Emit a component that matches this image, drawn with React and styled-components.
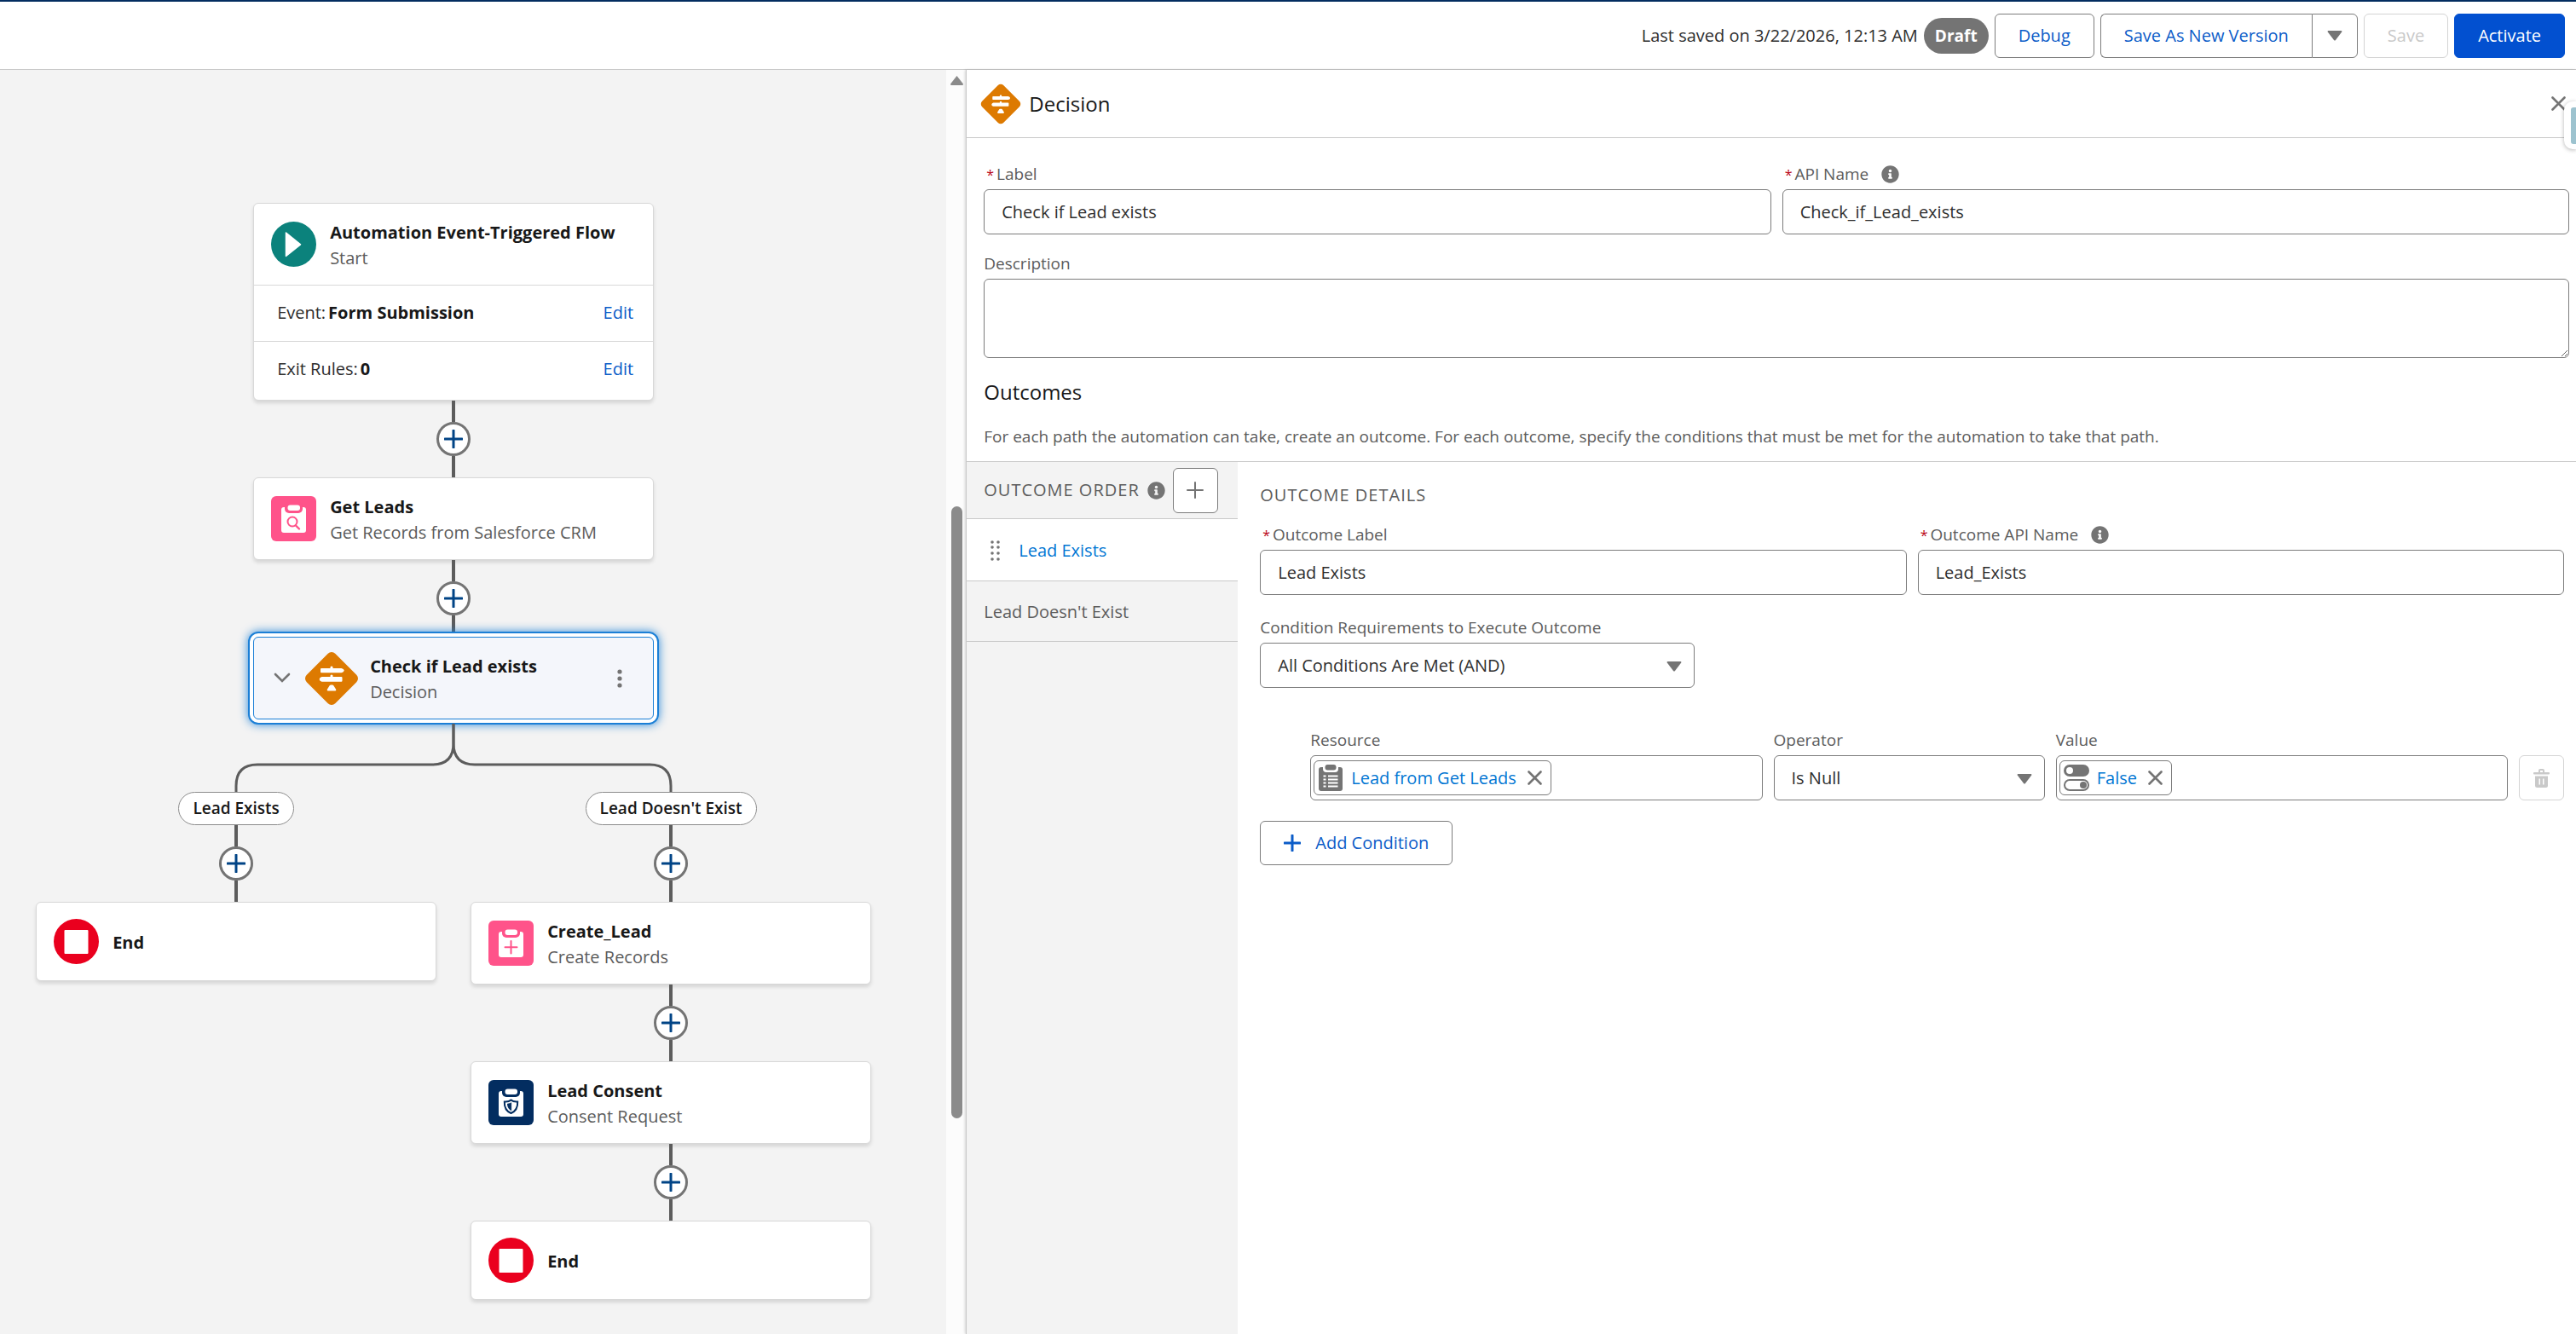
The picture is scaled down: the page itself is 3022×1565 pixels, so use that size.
import React, { useState } from 'react'
import styled, { createGlobalStyle, css } from 'styled-components'
import { FaInfoCircle } from 'react-icons/fa'

const GlobalStyle = createGlobalStyle`
  *, *::before, *::after {
    box-sizing: border-box;
  }
  body {
    margin: 0;
    background: #ffffff;
    color: #2e2e2e;
    font-family: 'Open Sans', 'Noto Sans', sans-serif;
    font-size: 20px;
    line-height: 30px;
  }
  button, input, textarea, select {
    font: inherit;
    color: inherit;
    margin: 0;
  }
  button {
    cursor: pointer;
  }
  a {
    text-decoration: none;
  }
`

const Page = styled.div`
  display: flex;
  flex-direction: column;
  min-height: 100vh;
`

/* ---------- top bar ---------- */

const TopBar = styled.header`
  display: flex;
  align-items: center;
  justify-content: flex-end;
  gap: 7px;
  height: 82px;
  padding-right: 13px;
  border-top: 2px solid #032d60;
  border-bottom: 1px solid #c9c9c9;
`
const DraftBadge = styled.span`
  display: flex;
  align-items: center;
  height: 42px;
  padding: 0 13px;
  border-radius: 21px;
  background: #747474;
  color: #ffffff;
  font-size: 19px;
  font-weight: 700;
`
const Button = styled.button`
  display: flex;
  align-items: center;
  justify-content: center;
  gap: 17px;
  height: 52px;
  padding: 0 27px;
  border: 1px solid #7c7c7c;
  border-radius: 6px;
  background: #ffffff;
  color: #0b5cc8;

  ${(props) =>
    props.$variant === 'brand' &&
    css`
      background: #0250d0;
      border-color: #0250d0;
      color: #ffffff;
    `}

  &:disabled {
    border-color: #d4d4d4;
    color: #c9c9c9;
    cursor: default;
  }
`
const ButtonGroup = styled.div`
  display: flex;

  & > button:first-child {
    border-radius: 6px 0 0 6px;
    border-right: 0;
  }
  & > button:last-child {
    border-radius: 0 6px 6px 0;
    padding: 0 17px;
  }
`

/* ---------- canvas ---------- */

const Main = styled.main`
  flex: 1;
  display: grid;
  grid-template-columns: 3fr 5fr;
`
const CanvasArea = styled.div`
  display: flex;
  min-width: 0;
  background: #f3f3f3;
`
const Canvas = styled.div`
  flex: 1;
  display: flex;
  flex-direction: column;
  align-items: center;
  padding: 156px 46px 20px 0;
`
const ScrollTrack = styled.div`
  width: 23px;
  padding: 7px 5px 0;
  background: #fcfcfc;
  display: grid;
  grid-template-rows: 505fr 718fr 253fr;
  justify-items: center;
`
const ScrollThumb = styled.div`
  width: 13px;
  border-radius: 7px;
  background: #8b8b8b;
`
const Card = styled.section`
  width: 470px;
  border: 1px solid #d8d8d8;
  border-radius: 6px;
  background: #ffffff;
  box-shadow: 0 3px 4px rgba(0, 0, 0, 0.12);
  padding-bottom: ${(props) => (props.$withRows ? '3px' : '0')};

  ${(props) =>
    props.$selected &&
    css`
      border-color: #1b7fd6;
      background: #f4f6fb;
      box-shadow: 0 0 0 4px #ffffff, 0 0 0 6px #1b7fd6,
        0 0 11px 6px rgba(27, 127, 214, 0.9);
    `}
`
const CardHead = styled.div`
  display: flex;
  align-items: center;
  gap: ${(props) => (props.$tight ? '13px' : '16px')};
  height: ${(props) => (props.$short ? '91px' : '95px')};
  padding: 0 20px;
`
const CardText = styled.div`
  flex: 1;
  padding-top: 2px;
`
const CardTitle = styled.h2`
  margin: 0;
  font-size: 20px;
  line-height: 30px;
  font-weight: 700;
  color: #181818;
`
const CardSub = styled.div`
  color: #5c5c5c;
`
const CardRow = styled.div`
  display: flex;
  align-items: center;
  gap: 3px;
  height: 66px;
  padding: 0 23px 2px 27px;
  border-top: 1px solid #d8d8d8;

  & > strong {
    color: #181818;
  }
  & > a {
    margin-left: auto;
    color: #0b5cc8;
  }
`
const GhostButton = styled.button`
  display: flex;
  align-items: center;
  justify-content: center;
  padding: 0;
  border: 0;
  background: none;
  width: ${(props) => props.$width || 'auto'};
`
const Link = styled.div`
  display: flex;
  flex-direction: column;
  align-items: center;
  height: 90px;

  &::before,
  &::after {
    content: '';
    flex: 1;
    width: 4px;
    background: #5c5c5c;
  }
`
const AddButton = styled.button`
  display: flex;
  align-items: center;
  justify-content: center;
  width: 40px;
  height: 40px;
  padding: 0;
  border: 3px solid #747474;
  border-radius: 50%;
  background: #ffffff;
`
const BranchLines = styled.svg`
  display: block;
`
const Branches = styled.div`
  display: flex;
  align-items: flex-start;
  gap: 40px;
`
const Branch = styled.div`
  display: flex;
  flex-direction: column;
  align-items: center;
`
const BranchLabel = styled.div`
  height: 39px;
  line-height: 37px;
  padding: 0 16px;
  border: 1px solid #8c8c8c;
  border-radius: 20px;
  background: #ffffff;
  color: #181818;
  font-size: 19px;
  font-weight: 600;
`

/* ---------- side panel ---------- */

const Panel = styled.aside`
  position: relative;
  display: flex;
  flex-direction: column;
  min-width: 0;
  border-left: 1px solid #c9c9c9;
  background: #ffffff;
  box-shadow: -1px 0 3px rgba(0, 0, 0, 0.16);
`
const PanelHead = styled.div`
  display: flex;
  align-items: center;
  gap: 9px;
  height: 80px;
  padding: 0 12px 0 16px;
  border-bottom: 1px solid #c9c9c9;

  & > button {
    margin-left: auto;
  }
`
const Heading = styled.h2`
  margin: 0;
  font-size: 24px;
  line-height: 32px;
  font-weight: 400;
  color: #181818;
`
const PanelIntro = styled.div`
  display: flex;
  flex-direction: column;
  padding: 28px 8px 15px 20px;
  border-bottom: 1px solid #c9c9c9;

  & > h2 {
    margin-top: 24px;
  }
`
const Hint = styled.p`
  margin: 22px 0 0;
  font-size: 19px;
  line-height: 28px;
  color: #5c5c5c;
`
const FieldPair = styled.div`
  display: grid;
  grid-template-columns: 1fr 1fr;
  gap: 13px;
`
const Field = styled.div`
  display: flex;
  flex-direction: column;
  gap: 4px;
  min-width: 0;
  margin-top: ${(props) => props.$top || '0'};
  width: ${(props) => props.$width || 'auto'};
`
const LabelRow = styled.div`
  display: flex;
  align-items: center;
  gap: 15px;
  height: 28px;
  color: #747474;

  & > label {
    color: #5c5c5c;
    font-size: 19px;
    line-height: 28px;
  }
`
const Required = styled.abbr`
  color: #ba0517;
  font-size: 16px;
  padding: 0 3px;
  text-decoration: none;
`
const boxStyle = css`
  width: 100%;
  height: 53px;
  border: 1px solid #7c7c7c;
  border-radius: 6px;
  background: #ffffff;
  color: #2e2e2e;
`
const TextInput = styled.input`
  ${boxStyle}
  padding: 0 20px;
`
const TextArea = styled.textarea`
  ${boxStyle}
  display: block;
  height: 93px;
  padding: 10px 20px;
`
const SelectWrap = styled.div`
  position: relative;
  color: #747474;

  & > svg {
    position: absolute;
    right: 15px;
    top: 22px;
    pointer-events: none;
  }
`
const Select = styled.select`
  ${boxStyle}
  appearance: none;
  padding: 0 40px 0 20px;
`
const ComboBox = styled.div`
  ${boxStyle}
  display: flex;
  align-items: center;
  padding: 0 3px;

  & > input {
    flex: 1;
    min-width: 0;
    height: 40px;
    border: 0;
    outline: 0;
    background: none;
  }
`
const Chip = styled.span`
  display: flex;
  align-items: center;
  gap: 9px;
  height: 41px;
  padding: 0 10px 0 4px;
  border: 1px solid #7c7c7c;
  border-radius: 6px;
  color: #0176d3;
  white-space: nowrap;

  & > button {
    margin-left: 4px;
  }
`
const Outcomes = styled.div`
  flex: 1;
  display: flex;
`
const OutcomeNav = styled.nav`
  width: 318px;
  background: #f3f3f3;
`
const NavHead = styled.div`
  display: flex;
  align-items: center;
  gap: 9px;
  height: 67px;
  padding-left: 20px;
  border-bottom: 1px solid #c9c9c9;
  color: #747474;
`
const Caps = styled.h3`
  margin: 0;
  font-size: 20px;
  line-height: 28px;
  font-weight: 400;
  letter-spacing: 1px;
  text-transform: uppercase;
  color: #5c5c5c;
`
const IconButton = styled.button`
  display: flex;
  align-items: center;
  justify-content: center;
  width: 53px;
  height: 53px;
  padding: 0;
  border: 1px solid #7c7c7c;
  border-radius: 6px;
  background: #ffffff;

  &:disabled {
    border-color: #d4d4d4;
    cursor: default;
  }
`
const NavItem = styled.button`
  display: flex;
  align-items: center;
  gap: 22px;
  width: 100%;
  height: ${(props) => (props.$active ? '73px' : '71px')};
  padding: 2px 0 0 ${(props) => (props.$active ? '28px' : '20px')};
  border: 0;
  border-bottom: 1px solid #c9c9c9;
  background: ${(props) => (props.$active ? '#ffffff' : 'none')};
  color: ${(props) => (props.$active ? '#0176d3' : '#5c5c5c')};
  text-align: left;
`
const Details = styled.div`
  flex: 1;
  min-width: 0;
  display: flex;
  flex-direction: column;
  align-items: stretch;
  padding: 25px 14px 40px 26px;

  & > h3 {
    margin-bottom: 18px;
  }
  & > button {
    align-self: flex-start;
    margin-top: 24px;
  }
`
const ConditionRow = styled.div`
  display: grid;
  grid-template-columns: 5fr 3fr 5fr 53px;
  gap: 13px;
  align-items: end;
  margin-top: 47px;
  padding-left: 59px;
`
const EdgeTab = styled.div`
  position: absolute;
  top: 37px;
  right: 0;
  width: 14px;
  height: 56px;
  padding: 7px 0 6px 8px;
  border-radius: 10px 0 0 10px;
  background: #ffffff;
  box-shadow: 0 1px 5px rgba(0, 0, 0, 0.3);

  &::after {
    content: '';
    display: block;
    height: 100%;
    border-radius: 3px 0 0 3px;
    background: #9dc3cf;
  }
`

/* ---------- icons ---------- */

const PlusIcon = ({ size = 22, stroke = 3, color = '#014486' }) => (
  <svg width={size} height={size} viewBox={`0 0 ${size} ${size}`} stroke={color} strokeWidth={stroke} strokeLinecap='round'>
    <path d={`M${size / 2} 1V${size - 1}M1 ${size / 2}H${size - 1}`} />
  </svg>
)

const CloseIcon = () => (
  <svg width='17' height='17' viewBox='0 0 17 17' stroke='#747474' strokeWidth='2.6' strokeLinecap='round'>
    <path d='M1.5 1.5L15.5 15.5M15.5 1.5L1.5 15.5' />
  </svg>
)

const CaretIcon = () => (
  <svg width='18' height='12' viewBox='0 0 18 12' fill='#747474'>
    <path d='M1.4 0H16.6Q18 .3 17.2 1.6L10 11Q9 12 8 11L.8 1.6Q0 .3 1.4 0Z' />
  </svg>
)

const DecisionIcon = ({ size }) => (
  <svg width={size} height={size} viewBox='0 0 64 64'>
    <path d='M32 7L57 32L32 57L7 32Z' fill='#dd7a01' stroke='#dd7a01' strokeWidth='12' strokeLinejoin='round' />
    <g fill='#ffffff'>
      <path d='M30.5 18.5Q32 16.6 33.5 18.5V20H43.5Q46.5 20.5 46.8 22.5Q46.5 24.8 43.5 25.3H20Q19 25.2 19 24.3V21Q19 20 20 20H30.5Z' />
      <path d='M30.5 28.5Q32 26.6 33.5 28.5V30H43.5Q44.5 30.1 44.5 31V34.7Q44.5 35.6 43.5 35.7H20.5Q18 35.2 17.6 32.9Q18 30.5 20.5 30H30.5Z' />
      <path d='M31 39.5H33Q34.3 39.6 34.8 41L37.3 45Q37.5 46.5 36 46.5H28Q26.5 46.5 26.7 45L29.2 41Q29.7 39.6 31 39.5Z' />
    </g>
  </svg>
)

const StartIcon = () => (
  <svg width='53' height='53' viewBox='0 0 53 53'>
    <circle cx='26.5' cy='26.5' r='26.5' fill='#0b827c' />
    <path d='M17.5 13V40.5L34.5 26.8Z' fill='#ffffff' stroke='#ffffff' strokeWidth='1.5' strokeLinejoin='round' />
  </svg>
)

const EndIcon = () => (
  <svg width='53' height='53' viewBox='0 0 53 53'>
    <circle cx='26.5' cy='26.5' r='26.5' fill='#ea001e' />
    <rect x='12.5' y='13' width='28' height='28' rx='1' fill='#ffffff' />
  </svg>
)

// clipboard tile shared by the data elements, the glyph sits on the board
const ClipboardTile = ({ color, children }) => (
  <svg width='53' height='53' viewBox='0 0 53 53'>
    <rect width='53' height='53' rx='6' fill={color} />
    <rect x='12' y='13' width='29' height='30' rx='3' fill='#ffffff' />
    <rect x='16' y='7' width='21' height='13' rx='5' fill={color} />
    <rect x='19.5' y='10.5' width='14.5' height='6.5' rx='3' fill='#ffffff' />
    <g fill='none' stroke={color} strokeWidth='2' strokeLinecap='round'>
      {children}
    </g>
  </svg>
)

const icons = {
  start: <StartIcon />,
  end: <EndIcon />,
  get: (
    <ClipboardTile color='#ff538a'>
      <circle cx='25' cy='30' r='5.5' />
      <path d='M29 34.5L33 38.5' strokeWidth='2.4' />
    </ClipboardTile>
  ),
  create: (
    <ClipboardTile color='#ff538a'>
      <path d='M26.5 24V38.5M19.5 31.3H33.5' />
    </ClipboardTile>
  ),
  consent: (
    <ClipboardTile color='#032d60'>
      <path d='M26.5 23.5C24.5 25.3 22 25.7 18.8 25.5C18.5 31.5 20.5 36.5 26.5 39C32.5 36.5 34.5 31.5 34.2 25.5C31 25.7 28.5 25.3 26.5 23.5Z' />
      <path d='M26.3 27C25 27.8 24 28 22.5 28C22.6 31.5 23.8 34 26.3 35.5Z' fill='#032d60' strokeWidth='1' />
    </ClipboardTile>
  ),
}

const RecordIcon = () => (
  <svg width='30' height='31' viewBox='0 0 30 31'>
    <rect x='1' y='3' width='28' height='28' rx='3' fill='#747474' />
    <rect x='6' y='-2' width='18' height='11' rx='4' fill='#ffffff' />
    <rect x='8.5' width='13' height='6.5' rx='3' fill='#747474' />
    <path d='M6.5 13.5H9.5M12 13.5H23.5M6.5 17.5H9.5M12 17.5H23.5M6.5 21.5H9.5M12 21.5H23.5M6.5 25.5H9.5M12 25.5H23.5' stroke='#ffffff' strokeWidth='2' />
  </svg>
)

const BooleanIcon = () => (
  <svg width='30' height='31' viewBox='0 0 30 31'>
    <rect width='30' height='14' rx='7' fill='#747474' />
    <circle cx='7' cy='7' r='4' fill='#ffffff' />
    <rect x='1' y='18' width='28' height='12' rx='6' fill='none' stroke='#747474' strokeWidth='2' />
    <circle cx='23' cy='24' r='4' fill='#747474' />
  </svg>
)

const TrashIcon = () => (
  <svg width='19' height='22' viewBox='0 0 19 22' fill='#c9c9c9'>
    <path d='M1 4H6V2Q6 0 8 0H11Q13 0 13 2V4H18Q19 4 19 5V5.5Q19 6.5 18 6.5H1Q0 6.5 0 5.5V5Q0 4 1 4ZM8 2V4H11V2Z' fillRule='evenodd' />
    <path d='M2 8.5H17V19.5Q17 22 14.5 22H4.5Q2 22 2 19.5ZM6.5 11.5V18.5H8V11.5ZM11 11.5V18.5H12.5V11.5Z' fillRule='evenodd' />
  </svg>
)

const DragIcon = () => (
  <svg width='11' height='24' viewBox='0 0 11 24' fill='#747474'>
    {[2, 8, 15, 22].map((y) => (
      <g key={y}>
        <circle cx='2' cy={y} r='1.8' />
        <circle cx='9' cy={y} r='1.8' />
      </g>
    ))}
  </svg>
)

const ChevronIcon = () => (
  <svg width='20' height='13' viewBox='0 0 20 13' fill='none' stroke='#747474' strokeWidth='2.6' strokeLinecap='round'>
    <path d='M2 2L10 10L18 2' />
  </svg>
)

const DotsIcon = () => (
  <svg width='6' height='22' viewBox='0 0 6 22' fill='#747474'>
    <circle cx='3' cy='3' r='2.6' />
    <circle cx='3' cy='11' r='2.6' />
    <circle cx='3' cy='19' r='2.6' />
  </svg>
)

/* ---------- parts ---------- */

const Connector = () => (
  <Link>
    <AddButton type='button' aria-label='Add element'>
      <PlusIcon />
    </AddButton>
  </Link>
)

const FlowCard = ({ icon, title, sub, children }) => (
  <Card $withRows={Boolean(children)}>
    <CardHead $short={!sub}>
      {icons[icon]}
      <CardText>
        <CardTitle>{title}</CardTitle>
        {sub ? <CardSub>{sub}</CardSub> : null}
      </CardText>
    </CardHead>
    {children}
  </Card>
)

const FieldLabel = ({ id, text, required, info }) => (
  <LabelRow>
    <label htmlFor={id}>
      {required ? <Required title='required'>*</Required> : null}
      {text}
    </label>
    {info ? <FaInfoCircle size={21} /> : null}
  </LabelRow>
)

const TextField = ({ id, label, info, value }) => {
  const [text, setText] = useState(value)
  return (
    <Field>
      <FieldLabel id={id} text={label} required info={info} />
      <TextInput id={id} value={text} onChange={(e) => setText(e.target.value)} />
    </Field>
  )
}

const SelectField = ({ id, label, options, top, width }) => (
  <Field $top={top} $width={width}>
    <FieldLabel id={id} text={label} />
    <SelectWrap>
      <Select id={id}>
        {options.map((o) => (
          <option key={o}>{o}</option>
        ))}
      </Select>
      <CaretIcon />
    </SelectWrap>
  </Field>
)

const ChipField = ({ id, label, icon, value }) => (
  <Field>
    <FieldLabel id={id} text={label} />
    <ComboBox>
      <Chip>
        {icon}
        {value}
        <GhostButton type='button' aria-label={`Remove ${value}`}>
          <CloseIcon />
        </GhostButton>
      </Chip>
      <input id={id} type='text' />
    </ComboBox>
  </Field>
)

const FlowCanvas = () => (
  <Canvas>
    <FlowCard icon='start' title='Automation Event-Triggered Flow' sub='Start'>
      <CardRow>
        <span>Event:</span>
        <strong>Form Submission</strong>
        <a href='#event'>Edit</a>
      </CardRow>
      <CardRow>
        <span>Exit Rules:</span>
        <strong>0</strong>
        <a href='#exit-rules'>Edit</a>
      </CardRow>
    </FlowCard>
    <Connector />
    <FlowCard icon='get' title='Get Leads' sub='Get Records from Salesforce CRM' />
    <Connector />
    <Card $selected>
      <CardHead $tight>
        <GhostButton type='button' $width='26px' aria-label='Collapse'>
          <ChevronIcon />
        </GhostButton>
        <DecisionIcon size={64} />
        <CardText>
          <CardTitle>Check if Lead exists</CardTitle>
          <CardSub>Decision</CardSub>
        </CardText>
        <GhostButton type='button' $width='38px' aria-label='More actions'>
          <DotsIcon />
        </GhostButton>
      </CardHead>
    </Card>
    <BranchLines width='514' height='85' viewBox='0 0 514 85' fill='none' stroke='#5c5c5c' strokeWidth='3'>
      <path d='M257 5V28Q257 53 232 53H27Q2 53 2 78V85' />
      <path d='M257 5V28Q257 53 282 53H487Q512 53 512 78V85' />
    </BranchLines>
    <Branches>
      <Branch>
        <BranchLabel>Lead Exists</BranchLabel>
        <Connector />
        <FlowCard icon='end' title='End' />
      </Branch>
      <Branch>
        <BranchLabel>Lead Doesn't Exist</BranchLabel>
        <Connector />
        <FlowCard icon='create' title='Create_Lead' sub='Create Records' />
        <Connector />
        <FlowCard icon='consent' title='Lead Consent' sub='Consent Request' />
        <Connector />
        <FlowCard icon='end' title='End' />
      </Branch>
    </Branches>
  </Canvas>
)

const DecisionPanel = () => (
  <Panel>
    <PanelHead>
      <DecisionIcon size={48} />
      <Heading>Decision</Heading>
      <GhostButton type='button' aria-label='Close'>
        <CloseIcon />
      </GhostButton>
    </PanelHead>
    <PanelIntro>
      <FieldPair>
        <TextField id='label' label='Label' value='Check if Lead exists' />
        <TextField id='api-name' label='API Name' info value='Check_if_Lead_exists' />
      </FieldPair>
      <Field $top='20px'>
        <FieldLabel id='description' text='Description' />
        <TextArea id='description' />
      </Field>
      <Heading>Outcomes</Heading>
      <Hint>
        For each path the automation can take, create an outcome. For each outcome, specify the
        conditions that must be met for the automation to take that path.
      </Hint>
    </PanelIntro>
    <Outcomes>
      <OutcomeNav>
        <NavHead>
          <Caps>Outcome Order</Caps>
          <FaInfoCircle size={21} />
          <IconButton type='button' aria-label='Add outcome'>
            <PlusIcon size={20} stroke={2} color='#747474' />
          </IconButton>
        </NavHead>
        <NavItem type='button' $active>
          <DragIcon />
          Lead Exists
        </NavItem>
        <NavItem type='button'>Lead Doesn't Exist</NavItem>
      </OutcomeNav>
      <Details>
        <Caps>Outcome Details</Caps>
        <FieldPair>
          <TextField id='outcome-label' label='Outcome Label' value='Lead Exists' />
          <TextField id='outcome-api-name' label='Outcome API Name' info value='Lead_Exists' />
        </FieldPair>
        <SelectField
          id='requirements'
          label='Condition Requirements to Execute Outcome'
          options={['All Conditions Are Met (AND)']}
          top='24px'
          width='510px'
        />
        <ConditionRow>
          <ChipField id='resource' label='Resource' icon={<RecordIcon />} value='Lead from Get Leads' />
          <SelectField id='operator' label='Operator' options={['Is Null']} />
          <ChipField id='value' label='Value' icon={<BooleanIcon />} value='False' />
          <IconButton type='button' disabled aria-label='Delete condition'>
            <TrashIcon />
          </IconButton>
        </ConditionRow>
        <Button type='button'>
          <PlusIcon size={20} stroke={3} color='#0b5cc8' />
          Add Condition
        </Button>
      </Details>
    </Outcomes>
    <EdgeTab />
  </Panel>
)

const App = () => (
  <Page>
    <GlobalStyle />
    <TopBar>
      <span>Last saved on 3/22/2026, 12:13 AM</span>
      <DraftBadge>Draft</DraftBadge>
      <Button type='button'>Debug</Button>
      <ButtonGroup>
        <Button type='button'>Save As New Version</Button>
        <Button type='button' aria-label='More save options'>
          <CaretIcon />
        </Button>
      </ButtonGroup>
      <Button type='button' disabled>
        Save
      </Button>
      <Button type='button' $variant='brand'>
        Activate
      </Button>
    </TopBar>
    <Main>
      <CanvasArea>
        <FlowCanvas />
        <ScrollTrack aria-hidden='true'>
          <svg width='15' height='11' viewBox='0 0 15 11' fill='#8b8b8b'>
            <path d='M7.5 0L15 9.5Q15 11 14 11H1Q0 11 0 9.5Z' />
          </svg>
          <ScrollThumb />
        </ScrollTrack>
      </CanvasArea>
      <DecisionPanel />
    </Main>
  </Page>
)

export default App
